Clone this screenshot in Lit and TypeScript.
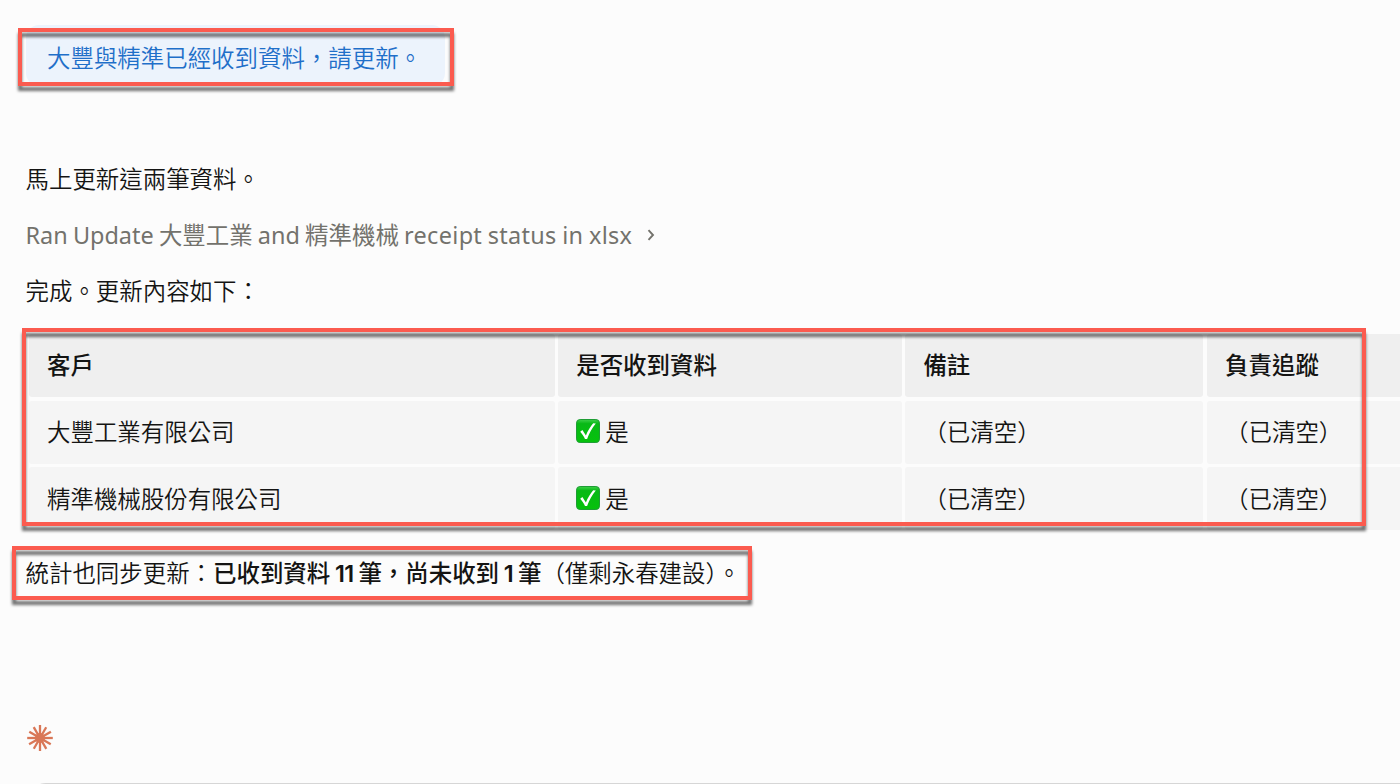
import { LitElement, html, svg, css } from "lit";
import { customElement } from "lit/decorators.js";

interface ReceiptRow {
  customer: string;
  received: string;
  note: string;
  owner: string;
}

const HEADERS = ["客戶", "是否收到資料", "備註", "負責追蹤"];

const ROWS: ReceiptRow[] = [
  {
    customer: "大豐工業有限公司",
    received: "是",
    note: "（已清空）",
    owner: "（已清空）",
  },
  {
    customer: "精準機械股份有限公司",
    received: "是",
    note: "（已清空）",
    owner: "（已清空）",
  },
];

// length of each ray, clockwise from twelve o'clock
const RAYS = [13, 12.4, 12.6, 12.8, 12.4, 12.6, 13, 12.4, 12.6, 12.8, 12.4, 12.6];

@customElement("check-mark")
export class CheckMark extends LitElement {
  static styles = css`
    :host {
      display: block;
      width: 24px;
      height: 24px;
    }

    svg {
      display: block;
    }
  `;

  render() {
    return html`
      <svg width="24" height="24" viewBox="0 0 24 24">
        <defs>
          <linearGradient id="fill" x1="0" y1="0" x2="0" y2="1">
            <stop offset="0" stop-color="#3fd04a" />
            <stop offset="0.18" stop-color="#08b916" />
            <stop offset="1" stop-color="#06c20c" />
          </linearGradient>
        </defs>
        <rect
          x="0.5"
          y="0.5"
          width="23"
          height="23"
          rx="3.6"
          fill="url(#fill)"
          stroke="#1f9d35"
        />
        <path
          d="M4.2 12.8 L6.4 11.1 L9.9 16.4 C11.8 11.8 14.2 7.8 17.2 4.2 L19.8 4.4 C16.1 8.9 13.2 14 11.1 20 L9 20 C7.8 17.3 6.2 15 4.2 12.8 Z"
          fill="#fff"
        />
      </svg>
    `;
  }
}

@customElement("spark-logo")
export class SparkLogo extends LitElement {
  static styles = css`
    :host {
      display: block;
      width: 28px;
      height: 28px;
    }

    svg {
      display: block;
    }
  `;

  render() {
    return html`
      <svg width="28" height="28" viewBox="-14 -14 28 28">
        <g stroke="#d97757" stroke-width="2.3">
          ${RAYS.map(
            (length, i) =>
              svg`<line x1="0" y1="0" x2="0" y2=${-length} transform="rotate(${i * 30})" />`,
          )}
        </g>
        <circle r="5" fill="#d97757" />
      </svg>
    `;
  }
}

@customElement("app-root")
export class AppRoot extends LitElement {
  static styles = css`
    :host {
      display: flex;
      flex-direction: column;
      box-sizing: border-box;
      height: 784px;
      padding: 25px 0 0 25.5px;
      overflow: hidden;
      background: #fcfcfc;
      color: #141413;
      font-family: "Noto Sans", "Noto Sans CJK TC", sans-serif;
      font-size: 23.45px;
      line-height: 36px;
    }

    .cjk {
      font-family: "Noto Sans CJK TC", sans-serif;
      font-weight: 350;
    }

    .framed {
      position: relative;
    }

    .frame {
      position: absolute;
      box-sizing: border-box;
      border: 4px solid #fb5b4f;
      filter: drop-shadow(0 5px 1.5px rgba(0, 0, 0, 0.55));
      pointer-events: none;
    }

    .bubble {
      flex: none;
      align-self: flex-start;
      box-sizing: border-box;
      width: 419px;
      height: 61px;
      margin-left: 0.5px;
      padding: 14px 0 0 21px;
      border-radius: 13px;
      background: #ecf3fc;
      color: #1f6fc9;
      white-space: nowrap;
    }

    .bubble .frame {
      inset: 3px -9px 0 -8px;
    }

    p {
      flex: none;
      margin: 0;
      white-space: nowrap;
    }

    .intro {
      margin-top: 74px;
    }

    .tool {
      display: flex;
      align-items: center;
      margin-top: 21px;
      color: #73726c;
    }

    .action {
      white-space: pre;
      word-spacing: -0.9px;
    }

    .object {
      letter-spacing: 0.33px;
    }

    .tool svg {
      margin-left: 15px;
    }

    .done {
      margin-top: 19px;
    }

    .table {
      flex: none;
      width: 1374px;
      height: 197px;
      margin: 26px 0 0 0.5px;
    }

    .table .frame {
      inset: -6px 34px 5px -4px;
    }

    .grid {
      display: grid;
      grid-template-columns: 525.5px 343.5px 298px 260px;
      grid-template-rows: 63px 63px 63px;
      gap: 3.7px;
      width: 1371px;
      margin-left: 3px;
      overflow: hidden;
    }

    .cell {
      display: flex;
      align-items: center;
      gap: 5px;
      box-sizing: border-box;
      padding: 0 0 2px 18px;
      border-radius: 3px;
      background: #f5f5f5;
      white-space: nowrap;
    }

    .head {
      padding-bottom: 3px;
      background: #efefef;
      font-weight: 500;
    }

    .summary {
      align-self: flex-start;
      width: 726px;
      height: 36px;
      margin-top: 23px;
    }

    .summary .frame {
      inset: -8px -0.5px -10px -13.5px;
    }

    b {
      font-weight: 500;
    }

    .count {
      font-family: Inter, sans-serif;
      font-weight: 600;
      letter-spacing: -0.6px;
      word-spacing: -0.5px;
    }

    .logo {
      flex: none;
      margin: 134px 0 0 0.5px;
    }

    .composer {
      flex: none;
      height: 40px;
      margin: 31px -20px 0 0;
      border: 1px solid #d6d6d6;
      border-radius: 20px;
      background: #fff;
    }
  `;

  renderRow(row: ReceiptRow) {
    return html`
      <div class="cell">${row.customer}</div>
      <div class="cell"><check-mark></check-mark>${row.received}</div>
      <div class="cell">${row.note}</div>
      <div class="cell">${row.owner}</div>
    `;
  }

  render() {
    return html`
      <div class="bubble framed cjk">
        大豐與精準已經收到資料，請更新。
        <div class="frame"></div>
      </div>

      <p class="intro cjk">馬上更新這兩筆資料。</p>
      <p class="tool">
        <span class="action">Ran Update 大豐工業 and 精準機械 </span>
        <span class="action object">receipt status in xlsx</span>
        <svg width="8" height="12" viewBox="0 0 8 12" fill="none">
          <path d="M1.5 1.2 L6 6 L1.5 10.8" stroke="#73726c" stroke-width="1.9" />
        </svg>
      </p>
      <p class="done cjk">完成。更新內容如下：</p>

      <div class="table framed cjk">
        <div class="grid">
          ${HEADERS.map((label) => html`<div class="cell head">${label}</div>`)}
          ${ROWS.map((row) => this.renderRow(row))}
        </div>
        <div class="frame"></div>
      </div>

      <p class="summary framed cjk">
        統計也同步更新：<b
          >已收到資料<span class="count"> 11 </span>筆，尚未收到<span class="count"> 1 </span
          >筆</b
        >（僅剩永春建設）。
        <span class="frame"></span>
      </p>

      <spark-logo class="logo"></spark-logo>
      <div class="composer"></div>
    `;
  }
}
